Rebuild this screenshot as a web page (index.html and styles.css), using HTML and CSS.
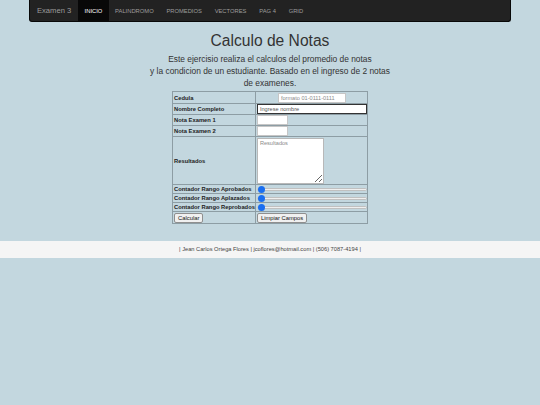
FILE: index.html
```html
<!DOCTYPE html>
<html lang="es">
<head>
<meta charset="utf-8">
<title>Examen 3</title>
<link rel="stylesheet" href="styles.css">
</head>
<body>
<nav class="navbar">
  <span class="brand">Examen 3</span>
  <ul class="nav">
    <li class="active">INICIO</li>
    <li>PALINDROMO</li>
    <li>PROMEDIOS</li>
    <li>VECTORES</li>
    <li>PAG 4</li>
    <li>GRID</li>
  </ul>
</nav>
<main class="content">
  <h1 class="title">Calculo de Notas</h1>
  <p class="intro">Este ejercisio realiza el calculos del promedio de notas<br>y la condicion de un estudiante. Basado en el ingreso de 2 notas<br>de examenes.</p>
  <table class="form-table">
    <tr class="r-cedula">
      <th>Cedula</th>
      <td class="center"><input class="in-cedula" type="text" placeholder="formato 01-0111-0111"></td>
    </tr>
    <tr class="r-std">
      <th>Nombre Completo</th>
      <td><input class="in-nombre" type="text" placeholder="Ingrese nombre"></td>
    </tr>
    <tr class="r-std">
      <th>Nota Examen 1</th>
      <td><input class="in-nota" type="text"></td>
    </tr>
    <tr class="r-std">
      <th>Nota Examen 2</th>
      <td><input class="in-nota" type="text"></td>
    </tr>
    <tr class="r-res">
      <th>Resultados</th>
      <td><textarea class="in-res" placeholder="Resultados"></textarea></td>
    </tr>
    <tr class="r-range">
      <th>Contador Rango Aprobados</th>
      <td><input class="range" type="range" min="0" max="10" value="0"></td>
    </tr>
    <tr class="r-range">
      <th>Contador Rango Aplazados</th>
      <td><input class="range" type="range" min="0" max="10" value="0"></td>
    </tr>
    <tr class="r-range">
      <th>Contador Rango Reprobados</th>
      <td><input class="range" type="range" min="0" max="10" value="0"></td>
    </tr>
    <tr class="r-btn">
      <th><button class="btn" type="button">Calcular</button></th>
      <td><button class="btn" type="button">Limpiar Campos</button></td>
    </tr>
  </table>
</main>
<footer class="footer">| Jean Carlos Ortega Flores | jcoflores@hotmail.com | (506) 7087-4194 |</footer>
</body>
</html>
```

FILE: styles.css
```css
html, body {
  margin: 0;
  padding: 0;
}
body {
  background: #c3d7df;
  font-family: "Liberation Sans", Arial, sans-serif;
  color: #333;
  min-height: 405px;
}
.navbar {
  margin: 0 29px;
  height: 21px;
  background: #222;
  border: 1px solid #080808;
  border-top: 0;
  border-radius: 0 0 3px 3px;
  display: flex;
  align-items: stretch;
}
.brand {
  display: flex;
  align-items: center;
  padding: 0 7px 0 7px;
  font-size: 7.6px;
  color: #9d9d9d;
}
.nav {
  list-style: none;
  margin: 0;
  padding: 0;
  display: flex;
}
.nav li {
  display: flex;
  align-items: center;
  padding: 0 6.4px;
  font-size: 5.8px;
  color: #9d9d9d;
}
.nav li.active {
  background: #080808;
  color: #fff;
}
.content {
  display: flex;
  flex-direction: column;
  align-items: center;
}
.title {
  margin: 9px 0 0;
  font-size: 15.6px;
  font-weight: normal;
  line-height: 20px;
  color: #333;
}
.intro {
  margin: 2px 0 2px;
  font-size: 8.4px;
  line-height: 12px;
  text-align: center;
  color: #333;
}
.form-table {
  border-collapse: collapse;
  width: 195px;
  font-size: 5.8px;
}
.form-table th,
.form-table td {
  border: 1px solid #8d9da4;
  padding: 0 0 0 1px;
  text-align: left;
  vertical-align: middle;
  color: #222;
}
.form-table th {
  width: 81px;
  font-weight: bold;
  white-space: nowrap;
}
.form-table td.center {
  text-align: center;
}
.r-cedula { height: 12px; }
.r-std { height: 11px; }
.r-res { height: 48px; }
.r-range { height: 9px; }
.r-btn { height: 12px; }
input[type="text"] {
  box-sizing: border-box;
  font-family: "Liberation Sans", Arial, sans-serif;
  font-size: 5.6px;
  margin: 0;
  padding: 0 2px;
  height: 10px;
  border: 1px solid #c6c6c6;
  background: #fff;
  display: block;
}
input::placeholder,
textarea::placeholder {
  color: #8a8a8a;
}
.in-cedula {
  width: 68px;
  margin: 0 auto !important;
}
.in-nombre {
  width: 110px;
  border-color: #333 !important;
}
.in-nombre::placeholder {
  color: #555;
}
.in-nota {
  width: 31px;
}
.in-res {
  box-sizing: border-box;
  display: block;
  width: 67px;
  height: 46px;
  margin: 0;
  padding: 1px 2px;
  font-family: "Liberation Sans", Arial, sans-serif;
  font-size: 5.6px;
  border: 1px solid #b8b8b8;
  background: #fff;
  resize: both;
}
.range {
  -webkit-appearance: none;
  appearance: none;
  display: block;
  width: 110px;
  height: 7px;
  margin: 0;
  padding: 0;
  background: transparent;
}
.range::-webkit-slider-runnable-track {
  height: 3px;
  background: #efefef;
  border: 1px solid #c0c0c0;
  border-radius: 2px;
}
.range::-webkit-slider-thumb {
  -webkit-appearance: none;
  appearance: none;
  width: 7px;
  height: 7px;
  border-radius: 50%;
  background: #1a6ef0;
  margin-top: -3px;
  border: 0;
}
.btn {
  font-family: "Liberation Sans", Arial, sans-serif;
  font-size: 5.8px;
  height: 10px;
  padding: 0 3px;
  margin: 0;
  line-height: 8px;
  background: #f0f0f0;
  border: 1px solid #8f8f8f;
  border-radius: 2px;
  color: #111;
  display: block;
}
.footer {
  margin-top: 17px;
  background: #f5f5f5;
  height: 17px;
  line-height: 17px;
  text-align: center;
  font-size: 5.7px;
  color: #444;
}
```
